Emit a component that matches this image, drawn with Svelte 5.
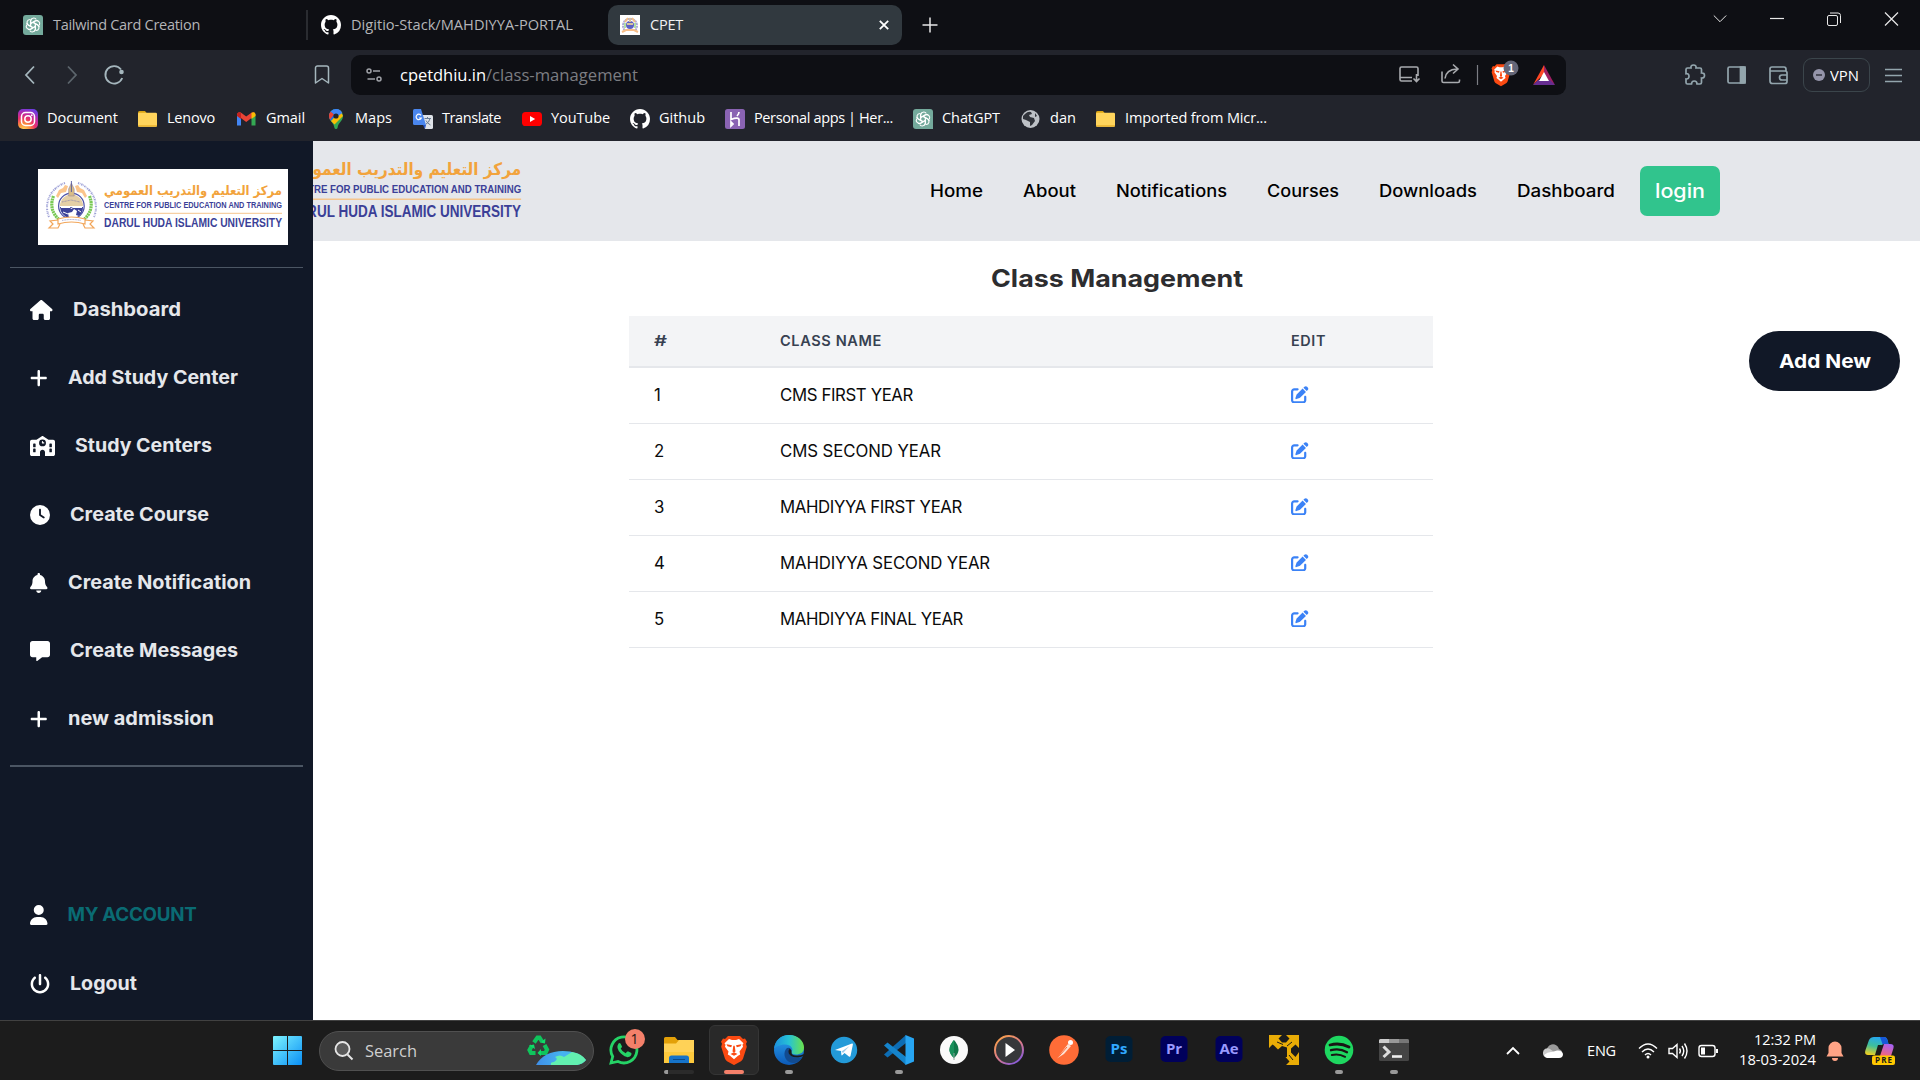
<script>
  // Makes a label fill the given width: wide labels are tracked tighter,
  // narrow ones have their letters widened.
  function fit(node, width) {
    const natural = node.getBoundingClientRect().width;
    const count = node.textContent.length;
    if (!count || !natural) return;
    if (natural > width) {
      node.style.letterSpacing = `${(width - natural) / count}px`;
    } else {
      node.style.display = 'inline-block';
      node.style.transformOrigin = '0 50%';
      node.style.transform = `scaleX(${width / natural})`;
      node.style.marginRight = `${width - natural}px`;
    }
  }

  const bookmarks = [
    { icon: 'instagram', label: 'Document', w: 71, gap: 20 },
    { icon: 'folder', label: 'Lenovo', w: 48, gap: 22 },
    { icon: 'gmail', label: 'Gmail', w: 39, gap: 21 },
    { icon: 'maps', label: 'Maps', w: 37, gap: 21 },
    { icon: 'translate', label: 'Translate', w: 59, gap: 21 },
    { icon: 'youtube', label: 'YouTube', w: 59, gap: 20 },
    { icon: 'github', label: 'Github', w: 46, gap: 20 },
    { icon: 'heroku', label: 'Personal apps | Her...', w: 139, gap: 20 },
    { icon: 'openai', label: 'ChatGPT', w: 58, gap: 21 },
    { icon: 'globe', label: 'dan', w: 26, gap: 20 },
    { icon: 'folder', label: 'Imported from Micr...', w: 142, gap: 0 }
  ];

  const sideItems = [
    { icon: 'home', label: 'Dashboard', w: 108 },
    { icon: 'plus', label: 'Add Study Center', w: 170 },
    { icon: 'school', label: 'Study Centers', w: 137 },
    { icon: 'clock', label: 'Create Course', w: 139 },
    { icon: 'bell', label: 'Create Notification', w: 183 },
    { icon: 'message', label: 'Create Messages', w: 168 },
    { icon: 'plus', label: 'new admission', w: 146 }
  ];
  const accountItems = [
    { icon: 'user', label: 'MY ACCOUNT', w: 129, accent: true },
    { icon: 'power', label: 'Logout', w: 67 }
  ];

  const glyphs = {
    home: [576, 'M575.8 255.5c0 18-15 32.1-32 32.1h-32l.7 160.2c0 2.7-.2 5.4-.5 8.1V472c0 22.1-17.9 40-40 40H456c-1.1 0-2.2 0-3.3-.1c-1.4 .1-2.8 .1-4.2 .1H416 392c-22.1 0-40-17.9-40-40V448 384c0-17.7-14.3-32-32-32H256c-17.7 0-32 14.3-32 32v64 24c0 22.1-17.9 40-40 40H160 128.1c-1.5 0-3-.1-4.5-.2c-1.2 .1-2.4 .2-3.6 .2H104c-22.1 0-40-17.9-40-40V360c0-.9 0-1.9 .1-2.8V287.6H32c-18 0-32-14-32-32.1c0-9 3-17 10-24L266.4 8c7-7 15-8 22-8s15 2 21 7L564.8 231.5c8 7 12 15 11 24z'],
    plus: [448, 'M256 80c0-17.7-14.3-32-32-32s-32 14.3-32 32V224H48c-17.7 0-32 14.3-32 32s14.3 32 32 32H192V432c0 17.7 14.3 32 32 32s32-14.3 32-32V288H400c17.7 0 32-14.3 32-32s-14.3-32-32-32H256V80z'],
    school: [640, 'M337.8 5.4C327-1.8 313-1.8 302.2 5.4L166.3 96H48C21.5 96 0 117.5 0 144V464c0 26.5 21.5 48 48 48H256V416c0-35.3 28.7-64 64-64s64 28.7 64 64v96H592c26.5 0 48-21.5 48-48V144c0-26.5-21.5-48-48-48H473.7L337.8 5.4zM96 192h32c8.8 0 16 7.2 16 16v64c0 8.8-7.2 16-16 16H96c-8.8 0-16-7.2-16-16V208c0-8.8 7.2-16 16-16zm400 16c0-8.8 7.2-16 16-16h32c8.8 0 16 7.2 16 16v64c0 8.8-7.2 16-16 16H512c-8.8 0-16-7.2-16-16V208zM96 320h32c8.8 0 16 7.2 16 16v64c0 8.8-7.2 16-16 16H96c-8.8 0-16-7.2-16-16V336c0-8.8 7.2-16 16-16zm400 16c0-8.8 7.2-16 16-16h32c8.8 0 16 7.2 16 16v64c0 8.8-7.2 16-16 16H512c-8.8 0-16-7.2-16-16V336zM232 176a88 88 0 1 1 176 0 88 88 0 1 1 -176 0zm88-48c-8.8 0-16 7.2-16 16v32c0 8.8 7.2 16 16 16h32c8.8 0 16-7.2 16-16s-7.2-16-16-16H336V144c0-8.8-7.2-16-16-16z'],
    clock: [512, 'M256 0a256 256 0 1 1 0 512A256 256 0 1 1 256 0zM232 120V256c0 8 4 15.5 10.7 20l96 64c11 7.4 25.9 4.4 33.3-6.7s4.4-25.9-6.7-33.3L280 243.2V120c0-13.3-10.7-24-24-24s-24 10.7-24 24z'],
    bell: [448, 'M224 0c-17.7 0-32 14.3-32 32V51.2C119 66 64 130.6 64 208v18.8c0 47-17.3 92.4-48.5 127.6l-7.4 8.3c-8.4 9.4-10.4 22.9-5.3 34.4S19.4 416 32 416H416c12.6 0 24-7.4 29.2-18.9s3.1-25-5.3-34.4l-7.4-8.3C401.3 319.2 384 273.9 384 226.8V208c0-77.4-55-142-128-156.8V32c0-17.7-14.3-32-32-32zm45.3 493.3c12-12 18.7-28.3 18.7-45.3H224 160c0 17 6.7 33.3 18.7 45.3s28.3 18.7 45.3 18.7s33.3-6.7 45.3-18.7z'],
    message: [512, 'M64 0C28.7 0 0 28.7 0 64V352c0 35.3 28.7 64 64 64h96v80c0 6.1 3.4 11.6 8.8 14.3s11.9 2.1 16.8-1.5L309.3 416H448c35.3 0 64-28.7 64-64V64c0-35.3-28.7-64-64-64H64z'],
    user: [448, 'M224 256A128 128 0 1 0 224 0a128 128 0 1 0 0 256zm-45.7 48C79.8 304 0 383.8 0 482.3C0 498.7 13.3 512 29.7 512H418.3c16.4 0 29.7-13.3 29.7-29.7C448 383.8 368.2 304 269.7 304H178.3z'],
    power: [512, 'M288 32c0-17.7-14.3-32-32-32s-32 14.3-32 32V256c0 17.7 14.3 32 32 32s32-14.3 32-32V32zM143.5 120.6c13.6-11.3 15.4-31.5 4.1-45.1s-31.5-15.4-45.1-4.1C49.7 115.4 16 181.8 16 256c0 132.5 107.5 240 240 240s240-107.5 240-240c0-74.2-33.8-140.6-86.6-184.6c-13.6-11.3-33.8-9.4-45.1 4.1s-9.4 33.8 4.1 45.1c38.9 32.3 63.5 81 63.5 135.4c0 97.2-78.8 176-176 176s-176-78.8-176-176c0-54.4 24.7-103.1 63.5-135.4z']
  };

  const links = [
    { label: 'Home', w: 53 },
    { label: 'About', w: 53 },
    { label: 'Notifications', w: 111 },
    { label: 'Courses', w: 72 },
    { label: 'Downloads', w: 98 },
    { label: 'Dashboard', w: 98 }
  ];

  const classes = [
    { name: 'CMS FIRST YEAR', w: 133 },
    { name: 'CMS SECOND YEAR', w: 161 },
    { name: 'MAHDIYYA FIRST YEAR', w: 182 },
    { name: 'MAHDIYYA SECOND YEAR', w: 210 },
    { name: 'MAHDIYYA FINAL YEAR', w: 183 }
  ];

  const apps = ['whatsapp', 'explorer', 'brave', 'edge', 'telegram', 'vscode', 'mongo', 'player', 'postman', 'ps', 'pr', 'ae', 'vmware', 'spotify', 'terminal'];
  const adobe = {
    ps: ['Ps', '#001e36', '#31a8ff'],
    pr: ['Pr', '#00005b', '#9999ff'],
    ae: ['Ae', '#00005b', '#9999ff']
  };
  const running = ['edge', 'vscode', 'spotify', 'terminal'];
</script>

{#snippet emblem()}
  <g fill="none">
    <path d="M11 48A25 25 0 0 1 17 20M17 20A25 25 0 0 1 27 14M40 14a25 25 0 0 1 11 7M51 21a25 25 0 0 1 5 27" stroke="#9da0d6" stroke-width="2" stroke-dasharray="1.3 .7 .6 .9" />
    <path d="M18 27l3-6 4-2 2-3 3 1-2 6-5 1-3 5zM49 27l-3-6-4-2-2-3-3 1 2 6 5 1 3 5z" fill="#fbc58c" />
    <path d="M15.500 27c-3.500 9-1.500 17 5 23M51.500 27c3.500 9 1.500 17-5 23" stroke="#79c955" stroke-width="3.200" stroke-dasharray="2 .6" />
    <circle cx="33.400" cy="37" r="12.800" fill="#fff" stroke="#4c51a8" stroke-width="1.200" />
    <path d="M22 37a11.400 11.400 0 0 1 23 0z" fill="#e4cfa6" />
    <path d="M24 33l9-2 9 2" stroke="#8d87ad" stroke-width=".8" stroke-dasharray="1 .5" />
    <path d="M22 38h23a11.500 11.500 0 0 1-4 9l-3-1 1-4-3-2-2 3-4 1 1 5a12 12 0 0 1-9-11z" fill="#3c4299" />
    <path d="M23 38.500h9l1 1 2-1h9M25 43l5 2M40 41l3 2" stroke="#fff" stroke-width="1" />
    <path d="M33.400 14l2.800 6v7h-5.600v-7z" fill="#d9bd86" stroke="#8a7a9f" stroke-width=".5" />
    <path d="M33.400 12v11" stroke="#55589c" stroke-width=".9" />
    <path d="M20 50q13.500-4 27 0v5q-13.500-4-27 0zM20 51l-8 1 3 3-4 4h9l2-4M47 51l8 1-3 3 4 4h-9l-2-4" stroke="#f2a65a" stroke-width="1.200" fill="#fff" />
    <path d="M24 51.500q9.500-2 19 0" stroke="#a0a2cf" stroke-width="1" stroke-dasharray="1 .6" />
  </g>
{/snippet}

{#snippet brandLogo()}
  {@render emblem()}
  <text class="ar" x="244" y="25.600" textLength="178" lengthAdjust="spacingAndGlyphs" direction="rtl">مركز التعليم والتدريب العمومي</text>
  <g transform="translate(66 0) scale(.86 1)">
    <text class="en" font-size="8.900" x="0" y="39.200" textLength="207" lengthAdjust="spacingAndGlyphs">CENTRE FOR PUBLIC EDUCATION AND TRAINING</text>
    <text class="en" font-size="12.300" x="0" y="57.700" textLength="207" lengthAdjust="spacingAndGlyphs">DARUL HUDA ISLAMIC UNIVERSITY</text>
  </g>
  <path d="M67 44.300h177" stroke="#f5c58c" stroke-width="1" />
{/snippet}

{#snippet lion()}
  <path d="M7 1h12l3 3 2-.5 2 3.500-1 2 .8 3-3.800 12.500q-.6 1.500-2 2.500L13 31l-7-4q-1.400-1-2-2.500L.2 12 1 9 0 7l2-3.500L4 4z" fill="#fb4a12" />
  <path d="M8 4l3 1.200h4L18 4l4.500 4.500-1 1.500.5 2-3.500 5 .7 3-2.200 1.500L13 25l-4-3.500L6.800 20l.7-3L4 12l.5-2-1-1.500z" fill="#fff" />
  <path d="M5.500 9.500l5.500 1-.8 2-3.700-1zM20.500 9.500l-5.500 1 .8 2 3.700-1zM12.300 11h1.400l.8 6-1.500 1-1.500-1zM9.500 19.500l3.500-1.600 3.500 1.600-3.500 2z" fill="#fb4a12" />
{/snippet}

{#snippet favicon(name)}
  <svg class="fav" viewBox="0 0 20 20">
    {#if name === 'openai'}
      <path d="M3 0h14a3 3 0 0 1 3 3v17H3a3 3 0 0 1-3-3V3a3 3 0 0 1 3-3z" fill="#74aa9c" />
      <g fill="none" stroke="#fff" stroke-width="1.100">
        {#each [0, 60, 120, 180, 240, 300] as turn}
          <path transform="rotate({turn} 10 10)" d="M7.700 11.200V6a3 3 0 0 1 5.600-1.400M7.700 8.500l4.600-2.700a3 3 0 0 1 2.600-.1" />
        {/each}
      </g>
    {:else if name === 'github'}
      <path transform="scale(1.250)" fill="#fff" d="M8 0C3.580 0 0 3.580 0 8c0 3.540 2.290 6.530 5.470 7.590.4.070.55-.17.55-.38 0-.19-.01-.82-.01-1.490-2.010.37-2.530-.49-2.690-.94-.09-.23-.48-.94-.82-1.130-.28-.15-.68-.52-.01-.53.63-.01 1.080.58 1.230.82.72 1.210 1.870.87 2.330.66.07-.52.28-.87.51-1.070-1.780-.2-3.640-.89-3.640-3.950 0-.87.31-1.590.82-2.150-.08-.2-.36-1.020.08-2.120 0 0 .67-.21 2.200.82.64-.18 1.320-.27 2-.27s1.360.09 2 .27c1.530-1.040 2.200-.82 2.200-.82.44 1.100.16 1.920.08 2.120.51.56.82 1.270.82 2.150 0 3.070-1.870 3.750-3.650 3.950.29.25.54.73.54 1.480 0 1.070-.01 1.930-.01 2.200 0 .21.15.46.55.38A8.010 8.010 0 0 0 16 8c0-4.420-3.580-8-8-8z" />
    {:else if name === 'cpet'}
      <path d="M0 0h20v20H0z" fill="#fff" />
      <path d="M4.500 15A7 7 0 1 1 15.500 15" fill="none" stroke="#a9a7d8" stroke-width="2" stroke-dasharray="2 .6" />
      <path d="M5 7l3-4M15 7l-3-4" stroke="#f4be83" stroke-width="2" />
      <path d="M5 8v5M15 8v5" stroke="#9bd486" stroke-width="1.500" />
      <circle cx="10" cy="10" r="4" fill="#5b5fc4" />
      <path d="M7 8h6v2H7zM9 3h2v4H9z" fill="#d6c39e" />
      <path d="M2 17l4-2h8l4 2" fill="none" stroke="#f5bd88" stroke-width="2" />
    {:else if name === 'instagram'}
      <defs>
        <radialGradient id="ig" cx=".27" cy="1.050" r="1.100">
          <stop offset="0" stop-color="#ffd85a" /><stop offset=".3" stop-color="#fb8a3c" /><stop offset=".55" stop-color="#e8306c" /><stop offset=".8" stop-color="#b32bb0" /><stop offset="1" stop-color="#6f3de0" />
        </radialGradient>
      </defs>
      <rect width="20" height="20" rx="5" fill="url(#ig)" />
      <g fill="none" stroke="#fff" stroke-width="1.500"><rect x="3.500" y="3.500" width="13" height="13" rx="4" /><circle cx="10" cy="10" r="3.200" /></g>
      <circle cx="13.800" cy="6.200" r=".9" fill="#fff" />
    {:else if name === 'folder'}
      <path d="M0 3.500A1.500 1.500 0 0 1 1.500 2H7l2 2.500h9V8H0z" fill="#dba414" />
      <rect y="3.800" width="19" height="14" rx="1.300" fill="#ffd45c" />
      <path d="M0 16h19v.5a1.300 1.300 0 0 1-1.300 1.300H1.300A1.300 1.300 0 0 1 0 16.500z" fill="#f0bb38" />
    {:else if name === 'gmail'}
      <path d="M0 5v11.500h4V8z" fill="#4285f4" /><path d="M18.500 5v11.500h-4V8z" fill="#34a853" />
      <path d="M0 6q0-2 1.500-2.500t3 .5l4.700 3.600L14 4q1.500-1 3-.5T18.500 6L9.200 13z" fill="#ea4335" />
      <path d="M14.500 3.800q4-1.500 4 2V7l-4 3z" fill="#fbbc04" /><path d="M4 3.800Q0 2.300 0 6v1l4 3z" fill="#c5221f" />
    {:else if name === 'maps'}
      <path d="M10 0a7 7 0 0 1 7 7c0 5-4.700 6-5.500 12q-.2 1-1.500 1t-1.500-1C7.700 13 3 12 3 7a7 7 0 0 1 7-7z" fill="#34a853" />
      <path d="M10 0a7 7 0 0 1 4.500 1.700L5 12C4 10.500 3 9 3 7a7 7 0 0 1 7-7z" fill="#1a73e8" />
      <path d="M4.700 2.500L8 5.500l-4 5.300C3.400 9.700 3 8.400 3 7q0-2.600 1.700-4.500z" fill="#ea4335" />
      <path d="M14.500 1.700L17 7l-8.500 8.500L5 12z" fill="#fbbc04" />
      <path d="M10 0a7 7 0 0 1 6.300 4L12 7 8.500 5.500 4.700 2.500A7 7 0 0 1 10 0z" fill="#4285f4" />
      <circle cx="10" cy="7" r="2.600" fill="#22242c" />
    {:else if name === 'translate'}
      <path d="M8 6h10.500q1.500 0 1.500 1.500v11q0 1.500-1.500 1.500H12z" fill="#dfe3e8" />
      <path d="M11.500 9.500h6.500M14.500 8v1.500M17 9.500q-.7 4-4.500 6M13 11.500q1.500 3 4.500 4.500" fill="none" stroke="#6b7c93" />
      <path d="M1.500 0H8l5 16H1.500Q0 16 0 14.500v-13Q0 0 1.500 0z" fill="#4a86ee" /><path d="M10 16h3l-1 4z" fill="#2a56c6" />
      <path d="M8 6.300A2.700 2.700 0 1 0 8.300 9H6" fill="none" stroke="#fff" stroke-width="1.200" />
    {:else if name === 'youtube'}
      <rect y="3" width="20" height="14" rx="3.600" fill="#f00" /><path d="M8 7l5.200 3L8 13z" fill="#fff" />
    {:else if name === 'heroku'}
      <rect width="20" height="20" rx="2.500" fill="#8a63b3" />
      <path d="M6 3v7.500q8-3 8 .5v6M14 3q0 2-2 4M6 13v4l2-2z" fill="none" stroke="#fff" stroke-width="1.700" />
    {:else if name === 'globe'}
      <circle cx="9.500" cy="10" r="9" fill="#bdc1c6" />
      <path d="M4 5q3-3 6-2l1 2-3 1 1 2 4 1 1 3-3 4-2 1v-4l-4-2-3-1 0-3zM14 4l2 3-2 1z" fill="#30333a" />
    {/if}
  </svg>
{/snippet}

{#snippet appIcon(name)}
  <svg class="app-icon" viewBox="0 0 30 30">
    {#if name === 'whatsapp'}
      <path d="M2 28l1.700-6.500A13 13 0 1 1 9 26.500z" fill="none" stroke="#25d366" stroke-width="2.800" />
      <path d="M9.500 8.500q1-1 2 0l1.500 3q0 1-1.300 2 1.500 3.500 5 4.700l1.500-1.600q.5-.4 1.200 0l3 1.500q.6 3-3 4-3 .5-7.500-3.500-5.500-5.500-2.400-10.100z" fill="#25d366" />
    {:else if name === 'explorer'}
      <path d="M0 3.500A1.500 1.500 0 0 1 1.500 2H11l2.500 3H30v6H0z" fill="#e3a008" />
      <path d="M0 8.500h12L15 5h15v23H0z" fill="#ffd257" /><path d="M0 17h30v11H0z" fill="#fbbf24" opacity=".5" />
      <path d="M5 28v-5a2.500 2.500 0 0 1 2.500-2.500h15A2.500 2.500 0 0 1 25 23v5z" fill="#1673c8" /><path d="M9 24.500h12" stroke="#0a4a8a" />
    {:else if name === 'brave'}
      <g transform="translate(2 0) scale(1 .97)">{@render lion()}</g>
    {:else if name === 'edge'}
      <defs>
        <linearGradient id="e1" x1="0" x2="1"><stop stop-color="#1b8fe0" /><stop offset=".5" stop-color="#27c3d4" /><stop offset="1" stop-color="#6be34a" /></linearGradient>
        <linearGradient id="e2" x1="0" y1="0" x2="0" y2="1"><stop stop-color="#2ba4f0" /><stop offset="1" stop-color="#0c59b8" /></linearGradient>
      </defs>
      <circle cx="15" cy="15" r="15" fill="url(#e2)" />
      <path d="M0 14C1 5 7 0 15 0c9 0 15 6 15 12.500 0 5-4 7-8 7-3 0-5-1-4.500-2.500C20 14 17 9.500 11 9.500 6 9.500 1 12 0 14z" fill="url(#e1)" />
      <path d="M12 14c-4 6 0 14 8 14 4 0 7-3 8.500-6-4 2-11 1-13-3-1-2-1-4 1-5.500q-2.500-1.500-4.500.5z" fill="#124b90" />
      <path d="M15.800 13.500q-2 2-1 5 2.500 4.500 9.500 4 3-.4 4.700-1.500l1-2q-4 2-8 1.500-5-.5-4.400-3.300.5-2.200-1.800-3.700z" fill="#1c1c1c" />
    {:else if name === 'telegram'}
      <circle cx="15" cy="15" r="13.200" fill="#239ad8" />
      <path d="M6 15L23 8.500q1-.2.900 1L21.500 21q-.4 1.200-1.600.5L15.500 18l-2.300 2.300q-.7.400-.8-.5l-.4-3.700z" fill="#fff" /><path d="M12.500 16.500l8-5.500-6.500 7z" fill="#9fcbe8" />
    {:else if name === 'vscode'}
      <path d="M22 0v8L3.500 22.500 0 19.500z" fill="#0d6db4" /><path d="M0 10.500L3.500 7.500 22 22v8z" fill="#1584cc" /><path d="M21.500 0L30 3.500v23L21.500 30z" fill="#27a5f2" />
    {:else if name === 'mongo'}
      <circle cx="15" cy="15" r="14" fill="#fafafa" /><path d="M15 5q9 10 0 18-9-8 0-18z" fill="#10774a" /><path d="M15 5q-9 10 0 18z" fill="#18915c" /><path d="M15 18v7" stroke="#8aa69a" />
    {:else if name === 'player'}
      <defs><linearGradient id="mp" x1="0" y1="0" x2=".7" y2="1"><stop stop-color="#ffa63e" /><stop offset=".6" stop-color="#d97a8c" /><stop offset="1" stop-color="#8a5bd8" /></linearGradient></defs>
      <circle cx="15" cy="15" r="14" fill="#36373a" stroke="url(#mp)" stroke-width="2" /><path d="M11.500 8l9.500 7-9.500 7z" fill="#fff" />
    {:else if name === 'postman'}
      <circle cx="15" cy="15" r="14.800" fill="#ff6c37" /><circle cx="21.500" cy="7.500" r="2.500" fill="#fff" />
      <path d="M19 9l3 2-7 8-7 4.500 6-8z" fill="#fde0d4" /><path d="M18 12l-10 11.500" stroke="#ff6c37" />
    {:else if adobe[name]}
      <rect x="1.500" y="1" width="27" height="26" rx="5" fill={adobe[name][1]} />
      <text class="adobe" x="15" y="18.500" fill={adobe[name][2]}>{adobe[name][0]}</text>
    {:else if name === 'vmware'}
      <path fill="#e9ac06" d="M0 0h13l-3.500 3.500L13 7.500h4l3.500-4L17 0h13v13l-3.500-3.500-4.500 4v4l4.500 4.500L30 17v13H17l3.500-3.500L16.500 22h1.500v-9.500L13 11l-4 3.500L5 10.500 3.500 9.500 0 13z" />
      <path d="M8 7l6 2.500M23 7l-5 4M20 20l4 5" stroke="#1c1c1c" stroke-width="1" fill="none" />
    {:else if name === 'spotify'}
      <circle cx="15" cy="15" r="14.300" fill="#1ed760" />
      <g fill="none" stroke="#191414" stroke-linecap="round"><path d="M6 10q10-2.700 19 2" stroke-width="2.800" /><path d="M7 15.200q8.500-2.400 16 2" stroke-width="2.300" /><path d="M7.800 20q7-1.800 13.300 1.800" stroke-width="2" /></g>
    {:else if name === 'terminal'}
      <rect y="4" width="30" height="22" rx="1.500" fill="#454545" /><path d="M1.500 4H10v4H0V5.500A1.500 1.500 0 0 1 1.500 4z" fill="#ccc" /><path d="M10 4h10v4H10z" fill="#999" /><path d="M20 4h8.500A1.500 1.500 0 0 1 30 5.500V8H20z" fill="#777" />
      <path d="M4.500 11.500l5.500 5.500-5.500 5" fill="none" stroke="#ddd" stroke-width="3" /><path d="M13 21.500h10" stroke="#eee" stroke-width="2.600" />
    {/if}
  </svg>
{/snippet}

{#snippet sideLink(item)}
  <div class="side-item">
    <svg viewBox="0 0 {glyphs[item.icon][0]} 512" height="20" width={(glyphs[item.icon][0] * 20) / 512}><path d={glyphs[item.icon][1]} fill="#fff" fill-rule="evenodd" /></svg>
    <span class="side-label" class:accent={item.accent} use:fit={item.w}>{item.label}</span>
  </div>
{/snippet}

<div class="screen">
  <div class="tabs">
    <div class="tab first">{@render favicon('openai')}<span use:fit={147}>Tailwind Card Creation</span></div>
    <div class="tab second">{@render favicon('github')}<span use:fit={222}>Digitio-Stack/MAHDIYYA-PORTAL</span></div>
    <div class="tab active">
      {@render favicon('cpet')}<span use:fit={33}>CPET</span>
      <svg class="tab-close" width="10" height="10" viewBox="0 0 10 10"><path d="M.8.8l8.400 8.400M9.200.8L.8 9.200" stroke="#fff" stroke-width="1.800" /></svg>
    </div>
    <svg class="new-tab" width="16" height="16" viewBox="0 0 16 16"><path d="M8 .5v15M.5 8h15" stroke="#e6e6e6" stroke-width="1.500" /></svg>
    <svg class="win" width="186" height="16" viewBox="0 0 186 16" fill="none" stroke="#e8e8e8">
      <path d="M.8 4.500L7 10.700l6.200-6.200" /><path d="M57 7.500h14" stroke-width="1.200" />
      <rect x="114.500" y="4.500" width="10" height="10" rx="1.500" /><path d="M117 2h8q2.500 0 2.500 2.500V12" />
      <path d="M172 1.500l13 13M185 1.500l-13 13" stroke-width="1.200" />
    </svg>
  </div>

  <div class="toolbar">
    <svg class="nav-icons" width="102" height="24" viewBox="0 0 102 24" fill="none" stroke="#a5b6bd" stroke-width="1.800">
      <path d="M10 3.500L2 12l8 8.500" /><path d="M44 3.500l8 8.500-8 8.500" stroke="#5c656c" />
      <path d="M97 6.500a8.700 8.700 0 1 0 1.200 8.500" /><circle cx="97.500" cy="9" r="2.300" fill="#a5b6bd" stroke="none" />
    </svg>
    <svg class="mark" width="16" height="20" viewBox="0 0 16 20"><path d="M1.500 18V3a2 2 0 0 1 2-2h9a2 2 0 0 1 2 2v15L8 13.500z" fill="none" stroke="#a5b6bd" stroke-width="1.500" stroke-linejoin="round" /></svg>
    <div class="url">
      <svg width="16" height="16" viewBox="0 0 16 16" fill="none" stroke="#a0a2a8" stroke-width="1.500"><circle cx="3" cy="4" r="2" /><path d="M7 4h7M1.500 12H9" /><circle cx="13" cy="12" r="2" /></svg>
      <span class="host" use:fit={86}>cpetdhiu.in</span><span class="path" use:fit={152}>/class-management</span>
      <svg class="url-icons" width="160" height="30" viewBox="0 0 160 30">
        <g fill="none" stroke="#a8aaae" stroke-width="1.600">
          <path d="M19 16V8.500Q19 7 17.500 7h-15Q1 7 1 8.500v11Q1 21 2.500 21H13M1 17.500h12M17.500 14v7M14.500 18.500l3 3 3-3" />
          <path d="M43 11.500V21q0 1.500 1.500 1.500H59q1.500 0 1.500-1.500v-1.500M46 18.500q1-9 12-9.500M54 4.500L59 9l-5 4.500" />
        </g>
        <path d="M78.500 5v20" stroke="#7b7d83" stroke-width="1.200" />
        <g transform="translate(92.500 3.500) scale(.73)">{@render lion()}</g>
        <circle cx="112" cy="8" r="7.500" fill="#646678" /><text class="badge-one" x="112" y="11.800">1</text>
        <path d="M145 5l11 20-11-7z" fill="#9e1f63" /><path d="M134 25L145 5v9z" fill="#ff4724" /><path d="M134 25l5-5h12l5 5z" fill="#662d91" /><path d="M145 12l5 9h-10z" fill="#fff" />
      </svg>
    </div>
    <svg class="ext-icons" width="106" height="22" viewBox="0 0 106 22" fill="none" stroke="#93a5ad" stroke-width="1.700">
      <path d="M2 5.500Q2 4 3.500 4H7q-.5-3 2.500-3t2.500 3h4q1.500 0 1.500 1.500V9q3-.2 3 2.500t-3 2.500v4.500q0 1.500-1.500 1.500H13q0-3-2.700-3t-2.800 3H3.500Q2 20 2 18.500V15q3 .2 3-2.700T2 9.700z" />
      <rect x="44" y="3" width="17" height="16" rx="1.500" /><path d="M56.500 3H61v16h-4.500z" fill="#93a5ad" />
      <path d="M102 7V5.500Q102 3 100 3H88q-2 0-2 2v12q0 2.500 2.500 2.500h12.500q2 0 2-2V9q0-2-2-2H86" /><path d="M103 11h-5q-2.500 0-2.500 2.500T98 16h5" />
    </svg>
    <div class="vpn">
      <svg width="12" height="12" viewBox="0 0 12 12"><circle cx="6" cy="6" r="6" fill="#9595aa" /><path d="M3 6h6" stroke="#22242c" stroke-width="1.300" /></svg>
      <span use:fit={29}>VPN</span>
    </div>
    <svg width="17" height="15" viewBox="0 0 17 15"><path d="M0 1.500h17M0 7.500h17M0 13.500h17" stroke="#93a5ad" stroke-width="1.500" /></svg>
  </div>

  <div class="bookmarks">
    {#each bookmarks as b}
      <div class="bookmark" style:margin-right="{b.gap}px">{@render favicon(b.icon)}<span use:fit={b.w}>{b.label}</span></div>
    {/each}
  </div>

  <div class="page">
    <aside>
      <svg class="side-logo" width="250" height="76" viewBox="0 0 250 76">{@render brandLogo()}</svg>
      <hr />
      <nav class="side-nav">{#each sideItems as item}{@render sideLink(item)}{/each}</nav>
      <hr class="thick" />
      <nav class="side-account">{#each accountItems as item}{@render sideLink(item)}{/each}</nav>
    </aside>
    <main>
      <header>
        <svg class="head-logo" width="328" height="100" viewBox="0 0 250 76">{@render brandLogo()}</svg>
        <nav class="links">{#each links as l}<span use:fit={l.w}>{l.label}</span>{/each}</nav>
        <button class="login"><span use:fit={50}>login</span></button>
      </header>
      <h1><span use:fit={252}>Class Management</span></h1>
      <div class="content">
        <div class="table">
          <div class="row head"><span><b use:fit={13}>#</b></span><span><b class="tracked" use:fit={102}>CLASS NAME</b></span><span><b class="tracked" use:fit={35}>EDIT</b></span></div>
          {#each classes as c, i}
            <div class="row">
              <span>{i + 1}</span><span><i use:fit={c.w}>{c.name}</i></span>
              <svg width="17.500" height="17.500" viewBox="0 0 512 512"><path fill="#3b82f6" d="M471.600 21.700c-21.900-21.900-57.300-21.900-79.200 0L362.300 51.700l97.900 97.900 30.100-30.100c21.900-21.900 21.900-57.300 0-79.200L471.600 21.700zm-299.200 220c-6.100 6.100-10.800 13.600-13.500 21.900l-29.600 88.800c-2.900 8.600-.6 18.100 5.800 24.600s15.900 8.700 24.600 5.800l88.800-29.600c8.200-2.700 15.700-7.400 21.900-13.500L437.700 172.300 339.700 74.300 172.400 241.700zM96 64C43 64 0 107 0 160V416c0 53 43 96 96 96H352c53 0 96-43 96-96V320c0-17.700-14.300-32-32-32s-32 14.300-32 32v96c0 17.700-14.300 32-32 32H96c-17.700 0-32-14.300-32-32V160c0-17.700 14.300-32 32-32h96c17.700 0 32-14.300 32-32s-14.300-32-32-32H96z" /></svg>
            </div>
          {/each}
        </div>
        <button class="add"><span use:fit={92}>Add New</span></button>
      </div>
    </main>
  </div>

  <div class="taskbar">
    <svg class="start" width="29" height="29" viewBox="0 0 29 29">
      <defs><linearGradient id="w" x1="0" y1="0" x2="1" y2="1"><stop stop-color="#7df4ff" /><stop offset="1" stop-color="#0a8ff5" /></linearGradient></defs>
      <path d="M1 0h13v14H0V1q0-1 1-1zM15 0h13q1 0 1 1v13H15zM0 15h14v14H1q-1 0-1-1zM15 15h14v13q0 1-1 1H15z" fill="url(#w)" />
    </svg>
    <div class="search">
      <svg width="20" height="20" viewBox="0 0 20 20"><circle cx="8.500" cy="8" r="7" fill="#5a5a5a" stroke="#e6e6e6" stroke-width="1.800" /><path d="M13.500 13.500l5 5" stroke="#e6e6e6" stroke-width="2" /></svg>
      <span use:fit={52}>Search</span>
      <svg class="earth" width="60" height="32" viewBox="0 0 60 32">
        <defs><linearGradient id="ea"><stop stop-color="#3f8ee8" /><stop offset=".5" stop-color="#46b2f0" /></linearGradient></defs>
        <g fill="none" stroke="#0fc45c" stroke-width="4.200"><path d="M7 7.500l3.500-5h2l2.500 4M17.500 10l2.500 4.500-1.500 3.500h-6M8.500 18H4l-1.500-3L5 10.500" /></g>
        <path d="M13 7.500l5 1 .5-5zM14 14v7l-3.500-3zM2 10.500l5-1 1 4.500z" fill="#0fdc67" />
        <path d="M9 30Q17 16 36 16q15 0 23 9-3 4-9 5z" fill="url(#ea)" />
        <path d="M24 30q-1-3 3-3 5-3 1-5 5-3 9 0l8-5q9 1 14 8-3 4-9 5z" fill="#62f0b0" />
      </svg>
    </div>
    <div class="apps">
      {#each apps as name}
        <div class="app">
          <div class="tile" class:current={name === 'brave'}>
            {@render appIcon(name)}
            {#if name === 'whatsapp'}<span class="count">1</span>{/if}
            {#if running.includes(name)}<span class="dot"></span>{/if}
            {#if name === 'brave'}<span class="dot wide"></span>{/if}
            {#if name === 'explorer'}<span class="dot track"></span>{/if}
          </div>
        </div>
      {/each}
    </div>
    <svg class="up" width="14" height="10" viewBox="0 0 14 10"><path d="M1 8l6-6 6 6" fill="none" stroke="#fff" stroke-width="1.800" /></svg>
    <svg class="cloud" width="20" height="14" viewBox="0 0 20 14"><path d="M4 8a6 6 0 0 1 12-3 4.500 4.500 0 0 1 3 5z" fill="#9a9a9a" /><path d="M0 9a4.500 4.500 0 0 1 7-4l8 6-11 2.500A4 4 0 0 1 0 9z" fill="#ccc" /><path d="M1 11q4-3.500 8-3l5-1.500q5-.5 6 3.500 0 4-4 4H4q-2 0-3-3z" fill="#fff" /></svg>
    <span class="lang" use:fit={29}>ENG</span>
    <svg class="status" width="81" height="20" viewBox="0 0 81 20" fill="none" stroke="#fff" stroke-width="1.400">
      <path d="M1 7.500q9-9 18 0M4 11q6-6 12 0M7 14q3-3 6 0" /><circle cx="10" cy="16" r="1.500" fill="#fff" stroke="none" />
      <path d="M31 7.500v5h3.500l4.500 4v-13l-4.500 4zM41.500 7.500q1.800 2.500 0 5M44 5q3.500 5 0 10M46.500 2.500q5 7.500 0 15" />
      <rect x="61" y="4.500" width="16" height="11" rx="2.500" /><rect x="63" y="6.500" width="4" height="7" fill="#fff" stroke="none" /><path d="M79 8v4" stroke-width="2" />
    </svg>
    <div class="datetime"><span use:fit={62}>12:32 PM</span><span use:fit={77}>18-03-2024</span></div>
    <svg class="tray-bell" width="18" height="20" viewBox="0 0 18 20"><path d="M9 .5a6.500 6.500 0 0 1 6.500 6.500v5l2 3.500H.5l2-3.500V7A6.500 6.500 0 0 1 9 .5zM6 17h6a3 3 0 0 1-6 0z" fill="#ffa486" /></svg>
    <svg class="copilot" width="31" height="30" viewBox="0 0 31 30">
      <defs>
        <linearGradient id="c1" x1=".5" y1="0" x2=".2" y2="1"><stop stop-color="#25a7f0" /><stop offset=".5" stop-color="#3fbf9a" /><stop offset="1" stop-color="#f3cf1e" /></linearGradient>
        <linearGradient id="c2" x1=".7" y1="0" x2=".3" y2="1"><stop stop-color="#a562f5" /><stop offset="1" stop-color="#f5647c" /></linearGradient>
      </defs>
      <path d="M9 1h10q2.500 0 3.500 3l1 4h-4q-3 0-4 3l-3 8H3q-4 0-2.500-5L4 4q1.500-3 5-3z" fill="url(#c1)" /><path d="M15 1h4q2.500 0 3.500 3l1 4h-6z" fill="#1758d8" />
      <path d="M19 8h6q4.500 0 3.500 4l-2.500 8H15z" fill="url(#c2)" /><path d="M13 9h4l-3.500 10H10z" fill="#1c1c1c" />
      <rect x="7" y="19.500" width="23" height="9.500" rx="2" fill="#ffc800" /><text class="pre" x="18.500" y="27" textLength="17">PRE</text>
    </svg>
  </div>
</div>

<style>
  :global(body) { margin: 0; background: #fff; }
  .screen { width: 1920px; height: 1080px; display: flex; flex-direction: column; overflow: hidden; font-family: 'Open Sans', 'Noto Sans', sans-serif; color: #fff; }
  .screen span { white-space: nowrap; }
  svg { flex: none; display: block; }
  .fav { width: 20px; height: 20px; }

  .tabs { height: 50px; background: #0e0f14; display: flex; align-items: center; font-size: 14.500px; color: #b4b5b8; }
  .tab { display: flex; align-items: center; gap: 10px; box-sizing: border-box; height: 30px; }
  .tab span, .url span, .bookmark span { padding-bottom: 2px; }
  .tab.first { width: 308px; padding-left: 23px; border-right: 2px solid #2a2c31; }
  .tab.second { width: 300px; padding-left: 13px; }
  .tab.active { width: 294px; height: 40px; padding: 0 13px 0 12px; border-radius: 10px; background: #31393f; color: #f1f2f3; }
  .tab-close { margin-left: auto; }
  .new-tab { margin-left: 20px; }
  .win { margin: -13px 21px 0 auto; }

  .toolbar { height: 50px; background: #22242c; display: flex; align-items: center; }
  .nav-icons { margin-left: 24px; }
  .mark { margin: 0 21px 0 188px; }
  .url { width: 1215px; height: 40px; background: #0e0f14; border-radius: 9px; display: flex; align-items: center; box-sizing: border-box; padding: 0 7px 0 15px; font-size: 16.500px; }
  .host { margin-left: 18px; }
  .path { color: #7c7d82; }
  .url-icons { margin-left: auto; }
  .badge-one { font: bold 10px 'Liberation Sans', sans-serif; fill: #fff; text-anchor: middle; }
  .ext-icons { margin-left: 118px; }
  .vpn { margin: 0 15px 0 13px; width: 67px; height: 34px; box-sizing: border-box; border: 1px solid #3b454b; border-radius: 9px; display: flex; align-items: center; gap: 5px; padding-left: 9px; font-size: 14.500px; }

  .bookmarks { height: 41px; background: #22242c; display: flex; align-items: center; padding: 0 0 4px 18px; box-sizing: border-box; font-size: 14.500px; }
  .bookmark { display: flex; align-items: center; gap: 9px; }

  .page { height: 879px; display: flex; font-family: Inter, sans-serif; }
  aside { width: 313px; background: #111827; box-sizing: border-box; padding: 28px 10px 0; display: flex; flex-direction: column; }
  .side-logo { background: #fff; margin-left: 28px; overflow: visible; }
  hr { width: 293px; margin: 22px 0 0; border: 0; border-top: 1px solid #4b5563; }
  hr.thick { border-top-width: 2px; margin-top: 12px; }
  .side-nav { padding-top: 8px; }
  .side-account { padding-top: 114px; }
  .side-item { height: 68.200px; display: flex; align-items: center; gap: 20px; padding-left: 20px; }
  .side-label { font-size: 18.800px; font-weight: 700; color: #e5e7eb; line-height: 24px; }
  .accent { color: #0a6b73; }
  .ar { font: bold 13px 'DejaVu Sans', sans-serif; fill: #f2a33c; }
  .en { font-family: 'Liberation Sans', sans-serif; font-weight: bold; fill: #3b3f97; }

  main { flex: 1; background: #fff; min-width: 0; }
  header { height: 100px; background: #e5e7eb; display: flex; align-items: center; overflow: hidden; }
  .head-logo { margin-left: -112px; overflow: visible; }
  .links { margin-left: 401px; display: flex; gap: 40px; font-size: 16.800px; font-weight: 500; color: #000; }
  .login { margin-left: 25px; width: 80px; height: 50px; border: 0; padding: 0; border-radius: 7px; background: #31c48d; color: #fff; font: 500 19.500px Inter, sans-serif; }
  h1 { margin: 23px 0 0; height: 30px; line-height: 30px; text-align: center; font-size: 24px; font-weight: 700; color: #2d2d2f; }
  .content { display: flex; margin-top: 22px; }
  .table { width: 804px; margin-left: 316px; }
  .row { height: 56px; box-sizing: border-box; border-bottom: 1px solid #e5e7eb; display: grid; grid-template-columns: 126px 511px 1fr; align-items: center; padding: 0 0 2px 25px; font-size: 16.800px; color: #0b0b0c; }
  .row i { font-style: normal; }
  .row b { font-weight: 600; }
  .row b.tracked { letter-spacing: .6px; }
  .head { height: 52px; background: #f3f4f6; border-bottom-width: 2px; font-size: 14.200px; font-weight: 600; color: #374151; }
  .add { width: 151px; height: 60px; margin: 15px 0 0 316px; padding: 0; border: 0; border-radius: 30px; background: #111827; color: #fff; font: 700 19px Inter, sans-serif; }

  .taskbar { height: 60px; box-sizing: border-box; background: #1c1c1c; border-top: 1px solid #414141; display: flex; align-items: center; }
  .start { margin-left: 273px; }
  .search { width: 275px; height: 40px; box-sizing: border-box; margin-left: 17px; border: 1px solid #505050; border-radius: 20px; background: #3a3a3a; display: flex; align-items: center; padding: 0 6px 0 14px; font-size: 16px; color: #cfcfcf; }
  .search span { margin-left: 11px; }
  .earth { margin-left: auto; }
  .apps { display: flex; margin-left: 2px; }
  .app { width: 55px; display: flex; justify-content: center; }
  .tile { width: 50px; height: 50px; box-sizing: border-box; border: 1px solid transparent; border-radius: 6px; display: flex; align-items: center; justify-content: center; position: relative; top: -1px; }
  .current { background: #292929; border-color: #353535; }
  .app-icon { width: 30px; height: 30px; }
  .count { position: absolute; left: 25px; top: 3px; width: 20px; height: 20px; border-radius: 50%; background: #f4806a; color: #231512; font-size: 14px; line-height: 20px; text-align: center; }
  .dot { position: absolute; left: 20px; bottom: 0; width: 8px; height: 4px; border-radius: 2px; background: #999; }
  .dot.wide { left: 14px; width: 20px; background: #f4806a; }
  .dot.track { left: 9px; width: 30px; background: linear-gradient(90deg, #999 4px, #2b2b2b 4px); }
  .adobe { font: bold 15px 'Open Sans', sans-serif; text-anchor: middle; }
  .up { margin-left: 85px; }
  .cloud { margin-left: 23px; }
  .lang { margin-left: 24px; font-size: 14.500px; padding-bottom: 1px; }
  .status { margin-left: 22px; }
  .datetime { width: 97px; display: flex; flex-direction: column; align-items: flex-end; font-size: 14.500px; line-height: 20px; margin-top: -2px; }
  .tray-bell { margin-left: 10px; }
  .copilot { margin-left: 21px; }
  .pre { font: bold 8px 'Open Sans', sans-serif; text-anchor: middle; fill: #1a1a1a; }
</style>
